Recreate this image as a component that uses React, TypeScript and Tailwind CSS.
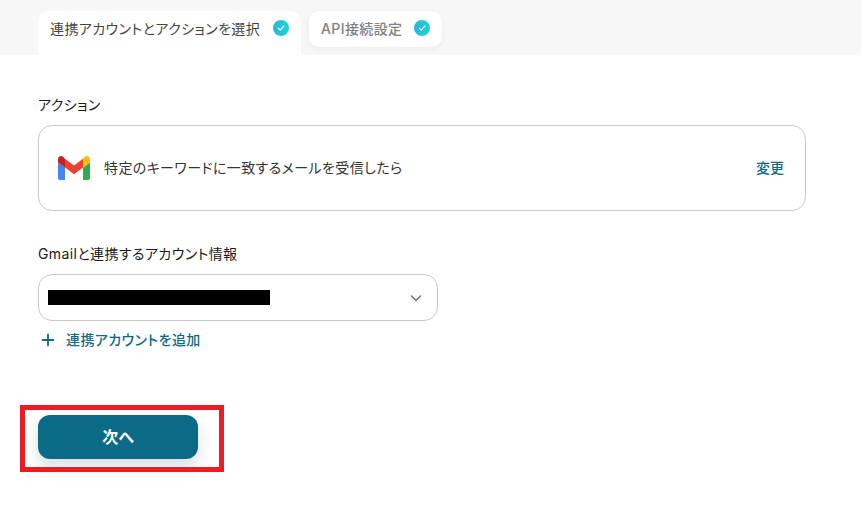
function CheckBadge() {
  return (
    <span className="flex h-4 w-4 shrink-0 items-center justify-center rounded-full bg-gradient-to-r from-[#2bb5d8] to-[#1ad5d5]">
      <svg width="8" height="8" viewBox="0 0 10 10" fill="none" stroke="white" strokeWidth="1.3" strokeLinecap="round" strokeLinejoin="round">
        <path d="M1.5 5.2 4 7.6 8.5 2.6" />
      </svg>
    </span>
  );
}

function GmailLogo() {
  return (
    <svg width="32" height="24" viewBox="0 0 32 24" className="shrink-0">
      <path d="M2 24h5V11.500L0 6.500V22a2 2 0 0 0 2 2z" fill="#4285f4" />
      <path d="M25 24h5a2 2 0 0 0 2-2V6.500l-7 5z" fill="#34a853" />
      <path d="M25 2.800v8.700l7-5V3.200C32 .6 29-.9 26.900.7z" fill="#fbbc04" />
      <path d="M7 11.500V2.800l9 6.700 9-6.700v8.700l-9 6.700z" fill="#ea4335" />
      <path d="M0 3.200v3.300l7 5V2.800L5.100.7C3 -.9 0 .6 0 3.200z" fill="#c5221f" />
    </svg>
  );
}

export default function App() {
  return (
    <div className="relative h-[515px] w-[861px] overflow-hidden bg-white font-['Inter','Noto_Sans_CJK_JP',sans-serif] tracking-[0.4px] [font-feature-settings:'palt']">
      <div className="flex h-[55px] items-start gap-2 bg-[#f7f7f7] pl-[38px] pt-[11px]">
        <div className="flex h-11 w-[263px] items-start justify-between rounded-t-[10px] bg-white pl-3 pr-3 pt-[9px]">
          <span className="whitespace-nowrap text-[14px] leading-[18px] text-[#444]">連携アカウントとアクションを選択</span>
          <CheckBadge />
        </div>
        <div className="flex h-9 w-[133px] items-start justify-between rounded-[10px] bg-white pl-3 pr-3 pt-[9px] shadow-[0_2px_6px_rgba(0,0,0,0.05)]">
          <span className="whitespace-nowrap text-[14px] font-medium leading-[18px] text-[#808080]">API接続設定</span>
          <CheckBadge />
        </div>
      </div>

      <div className="px-[38px]">
        <h2 className="mt-10 text-[14px] leading-5 text-[#1a1a1a]">アクション</h2>
        <div className="mt-[10px] flex h-[86px] w-[768px] items-center rounded-[14px] border border-[#c9c9c9] pl-[19px] pr-[21px]">
          <GmailLogo />
          <span className="ml-[14px] text-[14px] leading-5 text-[#333]">特定のキーワードに一致するメールを受信したら</span>
          <span className="ml-auto text-[14px] font-medium leading-5 tracking-normal text-[#0f6b84]">変更</span>
        </div>

        <h2 className="mt-[33px] text-[14px] leading-5 text-[#1a1a1a]">Gmailと連携するアカウント情報</h2>
        <div className="mt-[10px] flex h-[47px] w-[400px] items-center rounded-[14px] border border-[#c9c9c9] pl-[9px] pr-[14px]">
          <div className="h-[15px] w-[222px] bg-black" />
          <svg width="14" height="14" viewBox="0 0 14 14" fill="none" stroke="#777" strokeWidth="1.6" strokeLinecap="round" strokeLinejoin="round" className="ml-auto">
            <path d="M2.500 5 7 9.500 11.500 5" />
          </svg>
        </div>
        <div className="mt-[9px] flex items-center pl-[3px]">
          <svg width="14" height="14" viewBox="0 0 14 14" fill="none" stroke="#0f6b84" strokeWidth="1.8" strokeLinecap="round">
            <path d="M7 1.500v11M1.500 7h11" />
          </svg>
          <span className="ml-[11px] text-[14px] font-medium leading-5 text-[#0f6b84]">連携アカウントを追加</span>
        </div>

        <button className="mt-[65px] flex h-11 w-40 items-center justify-center rounded-[12px] bg-[#0b6a85] text-[16px] font-bold tracking-normal text-white shadow-[0_8px_16px_rgba(40,70,100,0.18)]">
          次へ
        </button>
      </div>

      <div className="absolute left-[20px] top-[405px] h-[67px] w-[204px] border-[5px] border-[#ed1c24]" />
    </div>
  );
}
